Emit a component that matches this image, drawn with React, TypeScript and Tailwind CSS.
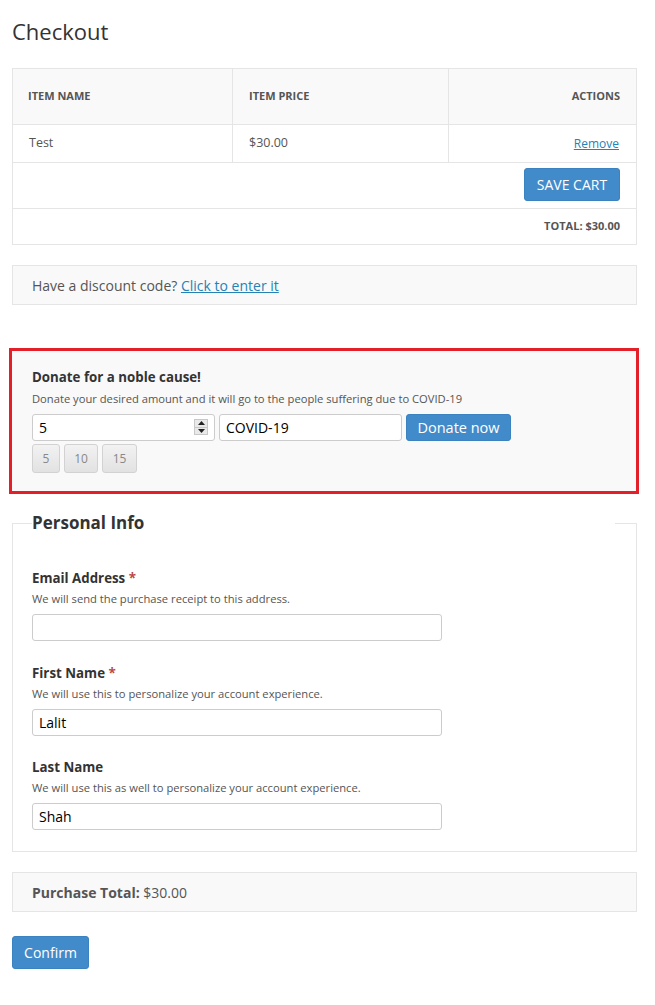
import React from "react";

const cell = "border-[#e5e5e5]";

function Spinner() {
  return (
    <div className="absolute right-[7px] top-[5px] flex h-[16px] w-[14px] flex-col border border-[#c8c8c8] bg-[#e9e9e9]">
      <div className="flex flex-1 items-center justify-center border-b border-[#c8c8c8]">
        <svg width="7" height="4" viewBox="0 0 7 4">
          <path d="M3.5 0L7 4H0z" fill="#222" />
        </svg>
      </div>
      <div className="flex flex-1 items-center justify-center">
        <svg width="7" height="4" viewBox="0 0 7 4">
          <path d="M0 0h7L3.5 4z" fill="#222" />
        </svg>
      </div>
    </div>
  );
}

interface FieldProps {
  label: string;
  help: string;
  value: string;
  required?: boolean;
  gap: string;
}

const Field: React.FC<FieldProps> = ({ label, help, value, required, gap }) => {
  return (
    <div className={gap}>
      <div className="text-[13.3px] font-bold leading-[18px] text-[#333]">
        {label}
        {required && <span className="text-[#b94a48]"> *</span>}
      </div>
      <div className="mt-[4px] text-[11.2px] leading-[16px] text-[#555]">{help}</div>
      <input
        readOnly
        value={value}
        className="mt-[7px] block h-[27px] w-[410px] rounded-[3px] border border-[#ccc] bg-white px-[6px] text-[14px] text-black outline-none"
      />
    </div>
  );
};

export default function App() {
  return (
    <div
      className="min-h-screen bg-white pl-[12px] pt-[19px] text-[#555]"
      style={{ fontFamily: '"Open Sans", "Liberation Sans", sans-serif' }}
    >
      <h1 className="text-[22px] leading-[24px] font-normal text-[#333]">Checkout</h1>

      {/* cart table */}
      <div className={`mt-[25px] w-[625px] border ${cell}`}>
        <div className={`flex h-[56px] border-b ${cell} bg-[#f9f9f9] text-[11px] font-bold uppercase text-[#555]`}>
          <div className={`flex w-[220px] items-center border-r ${cell} pl-[15px]`}>Item Name</div>
          <div className={`flex w-[216px] items-center border-r ${cell} pl-[16px]`}>Item Price</div>
          <div className="flex flex-1 items-center justify-end pr-[16px]">Actions</div>
        </div>
        <div className={`flex h-[38px] border-b ${cell} text-[12.5px]`}>
          <div className={`flex w-[220px] items-center border-r ${cell} pl-[16px]`}>Test</div>
          <div className={`flex w-[216px] items-center border-r ${cell} pl-[16px]`}>$30.00</div>
          <div className="flex flex-1 items-center justify-end pr-[17px]">
            <a href="#" className="text-[12px] text-[#2582b5] underline">
              Remove
            </a>
          </div>
        </div>
        <div className={`flex h-[46px] justify-end border-b ${cell} pr-[16px] pt-[5px]`}>
          <button className="h-[33px] w-[96px] rounded-[3px] border border-[#3b82c0] bg-[#428bca] text-[14px] text-white">
            SAVE CART
          </button>
        </div>
        <div className="flex h-[35px] items-center justify-end pr-[16px] text-[11px] font-bold text-[#555]">
          TOTAL: $30.00
        </div>
      </div>

      {/* discount */}
      <div className={`mt-[20px] flex h-[40px] w-[625px] items-center border ${cell} bg-[#f9f9f9] pl-[19px] text-[14px]`}>
        Have a discount code?&nbsp;
        <a href="#" className="text-[#2582b5] underline">
          Click to enter it
        </a>
      </div>

      {/* donation */}
      <div className="-ml-[3px] mt-[43px] h-[146px] w-[630px] border-[3px] border-[#e3202a] bg-[#f9f9f9] pl-[20px] pt-[17px]">
        <div className="text-[13.3px] font-bold leading-[18px] text-[#333]">Donate for a noble cause!</div>
        <div className="mt-[4px] text-[11.2px] leading-[17px] text-[#555]">
          Donate your desired amount and it will go to the people suffering due to COVID-19
        </div>
        <div className="mt-[7px] flex gap-[4px]">
          <div className="relative">
            <input
              readOnly
              value="5"
              className="block h-[27px] w-[183px] rounded-[3px] border border-[#ccc] bg-white px-[6px] text-[14px] text-black outline-none"
            />
            <Spinner />
          </div>
          <input
            readOnly
            value="COVID-19"
            className="block h-[27px] w-[183px] rounded-[3px] border border-[#ccc] bg-white px-[6px] text-[14px] text-black outline-none"
          />
          <button className="h-[27px] w-[105px] rounded-[3px] border border-[#3b82c0] bg-[#428bca] text-[14.5px] text-white">
            Donate now
          </button>
        </div>
        <div className="mt-[3px] flex gap-[4px]">
          {[
            ["5", "w-[28px]"],
            ["10", "w-[34px]"],
            ["15", "w-[35px]"],
          ].map(([n, w]) => (
            <button
              key={n}
              className={`h-[29px] ${w} rounded-[3px] border border-[#d2d2d2] bg-gradient-to-b from-[#f2f2f2] to-[#e2e2e2] text-[12px] text-[#888]`}
            >
              {n}
            </button>
          ))}
        </div>
      </div>

      {/* personal info */}
      <fieldset className={`mt-[17px] w-[625px] border ${cell} pb-[21px] pl-[19px]`}>
        <legend className="w-[583px] text-[17px] font-bold leading-[24px] text-[#333]">Personal Info</legend>
        <Field
          gap="mt-[34px]"
          label="Email Address"
          required
          help="We will send the purchase receipt to this address."
          value=""
        />
        <Field
          gap="mt-[23px]"
          label="First Name"
          required
          help="We will use this to personalize your account experience."
          value="Lalit"
        />
        <Field
          gap="mt-[22px]"
          label="Last Name"
          help="We will use this as well to personalize your account experience."
          value="Shah"
        />
      </fieldset>

      {/* total */}
      <div className={`mt-[20px] flex h-[40px] w-[625px] items-center border ${cell} bg-[#f9f9f9] pl-[19px] text-[14px]`}>
        <span className="font-bold">Purchase Total:</span>&nbsp;$30.00
      </div>

      <button className="mt-[24px] h-[33px] w-[77px] rounded-[3px] border border-[#3b82c0] bg-[#428bca] text-[14px] text-white">
        Confirm
      </button>
    </div>
  );
}
